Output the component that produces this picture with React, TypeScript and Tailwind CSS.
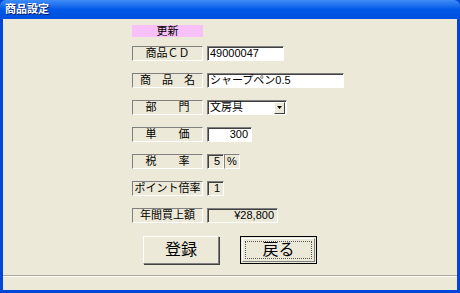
const font = "font-['Liberation_Sans','Noto_Sans_CJK_JP',sans-serif]";

const sunken =
  "border-t border-l border-t-[#808080] border-l-[#808080] border-b border-r border-b-white border-r-white";

function Label({ text }: { text: string }) {
  return (
    <div
      className={`flex h-[15px] w-[71px] items-center justify-center ${sunken} text-[11px] leading-none text-black`}
    >
      <span className="whitespace-pre">{text}</span>
    </div>
  );
}

function Field({
  value,
  width,
  align = "left",
  disabled = false,
}: {
  value: string;
  width: string;
  align?: "left" | "right";
  disabled?: boolean;
}) {
  return (
    <div
      className={`flex h-[15px] ${width} items-center ${sunken} shadow-[inset_1px_1px_0_#404040] ${
        disabled ? "bg-[#ece9d8]" : "bg-white"
      } ${align === "right" ? "justify-end pr-[3px]" : "justify-start pl-[2px]"} text-[11px] leading-none text-black`}
    >
      {value}
    </div>
  );
}

const rows: { label: string; field: React.ReactNode }[] = [
  { label: "商品ＣＤ", field: <Field value="49000047" width="w-[77px]" /> },
  { label: "商　品　名", field: <Field value="シャープペン0.5" width="w-[137px]" /> },
  {
    label: "部　　門",
    field: (
      <div
        className={`flex h-[15px] w-[80px] items-center ${sunken} shadow-[inset_1px_1px_0_#404040] bg-white text-[11px] leading-none`}
      >
        <span className="flex-1 pl-[2px]">文房具</span>
        <span className="mr-[1px] flex h-[12px] w-[11px] items-center justify-center border border-t-white border-l-white border-b-[#404040] border-r-[#404040] bg-[#ece9d8]">
          <svg width="5" height="3" viewBox="0 0 5 3">
            <path d="M0 0h5L2.5 3z" fill="#000" />
          </svg>
        </span>
      </div>
    ),
  },
  { label: "単　　価", field: <Field value="300" width="w-[45px]" align="right" /> },
  {
    label: "税　　率",
    field: (
      <div className="flex">
        <Field value="5" width="w-[17px]" align="right" disabled />
        <div className={`flex h-[15px] w-[16px] items-center justify-center ${sunken} text-[11px] leading-none`}>
          %
        </div>
      </div>
    ),
  },
  { label: "ポイント倍率", field: <Field value="1" width="w-[17px]" align="right" disabled /> },
  { label: "年間買上額", field: <Field value="¥28,800" width="w-[71px]" align="right" disabled /> },
];

export default function App() {
  return (
    <div className={`flex h-[293px] w-[460px] flex-col bg-[#0047d8] ${font}`}>
      <div className="flex h-[19px] items-center rounded-t-[6px] bg-gradient-to-b from-[#3d8cf7] via-[#0058e6] to-[#0050df] pl-[5px]">
        <span className="text-[11px] font-bold leading-none text-white [text-shadow:1px_1px_0_#0a1e6e]">
          商品設定
        </span>
      </div>
      <div className="mx-[3px] mb-[3px] flex flex-1 flex-col bg-[#ece9d8]">
        <div className="flex flex-1 flex-col pl-[129px] pt-[6px]">
          <div className="flex h-[12px] w-[71px] items-center justify-center bg-[#f8c0f8] text-[11px] leading-none text-black">
            更新
          </div>
          <div className="mt-[9px] flex flex-col gap-[12px]">
            {rows.map((r) => (
              <div key={r.label} className="flex gap-[4px]">
                <Label text={r.label} />
                {r.field}
              </div>
            ))}
          </div>
          <div className="mt-[13px] flex gap-[21px] pl-[11px]">
            <button className="flex h-[28px] w-[76px] items-center justify-center border border-t-white border-l-white border-b-[#808080] border-r-[#808080] bg-[#ece9d8] text-[16px] leading-none text-black shadow-[1px_1px_0_#404040]">
              登録
            </button>
            <button className="flex h-[28px] w-[77px] items-center justify-center border border-black bg-[#ece9d8] p-[1px]">
              <span className="flex h-full w-full items-center justify-center border border-t-white border-l-white border-b-[#808080] border-r-[#808080] p-[2px]">
                <span className="flex h-full w-full items-center justify-center border border-dotted border-[#555] text-[16px] leading-none text-black">
                  戻る
                </span>
              </span>
            </button>
          </div>
        </div>
        <div className="h-[15px] border-t border-t-[#aca899] shadow-[inset_0_1px_0_white]" />
      </div>
    </div>
  );
}
